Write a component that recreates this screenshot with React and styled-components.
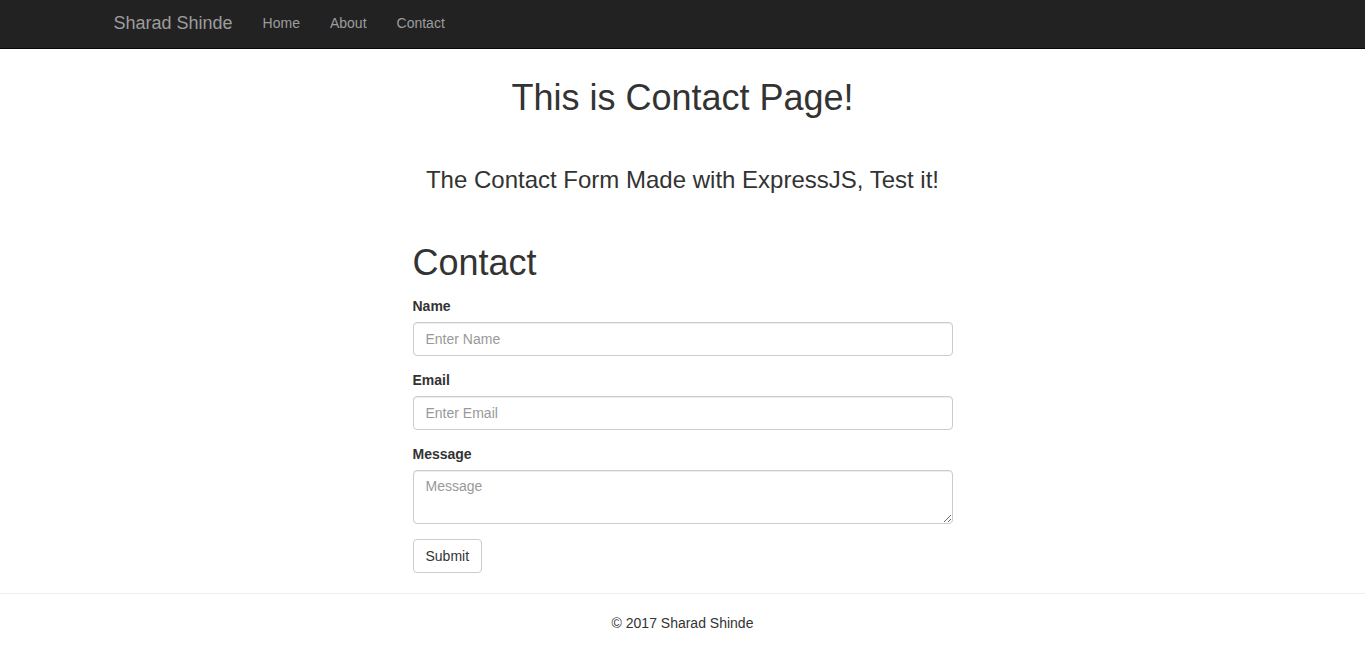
import styled, { createGlobalStyle } from 'styled-components';

const GlobalStyle = createGlobalStyle`
  body {
    margin: 0;
    font-family: "Liberation Sans", Arial, sans-serif;
    font-size: 14px;
    line-height: 1.42857;
    color: #333;
    background: #fff;
  }
  * { box-sizing: border-box; }
`;

export default function App() {
  return (
    <>
      <GlobalStyle />
      <Navbar>
        <NavInner>
          <Brand>Sharad Shinde</Brand>
          <NavLink>Home</NavLink>
          <NavLink>About</NavLink>
          <NavLink>Contact</NavLink>
        </NavInner>
      </Navbar>
      <Main>
        <PageTitle>This is Contact Page!</PageTitle>
        <SubTitle>The Contact Form Made with ExpressJS, Test it!</SubTitle>
        <Form onSubmit={(e) => e.preventDefault()}>
          <FormTitle>Contact</FormTitle>
          <FormGroup>
            <Label>Name</Label>
            <Input type='text' placeholder='Enter Name' />
          </FormGroup>
          <FormGroup>
            <Label>Email</Label>
            <Input type='email' placeholder='Enter Email' />
          </FormGroup>
          <FormGroup>
            <Label>Message</Label>
            <TextArea placeholder='Message' />
          </FormGroup>
          <Button type='submit'>Submit</Button>
        </Form>
      </Main>
      <Footer>© 2017 Sharad Shinde</Footer>
    </>
  );
}

const Navbar = styled.nav`
  background-color: #222;
  border-bottom: 1px solid #080808;
  height: 49px;
`;
const NavInner = styled.div`
  width: 1170px;
  margin: 0 auto;
  padding: 0 15px 0 16px;
  display: flex;
  align-items: center;
  height: 48px;
`;
const Brand = styled.a`
  font-size: 18px;
  color: #9d9d9d;
  margin-right: 15px;
  cursor: pointer;
`;
const NavLink = styled.a`
  color: #9d9d9d;
  font-size: 14px;
  padding: 0 15px;
  cursor: pointer;
`;
const Main = styled.main`
  width: 540px;
  margin: 0 auto;
`;
const PageTitle = styled.h1`
  font-size: 36px;
  font-weight: 500;
  line-height: 1.1;
  text-align: center;
  margin: 29px 0 0;
`;
const SubTitle = styled.h2`
  font-size: 24px;
  font-weight: 500;
  line-height: 1.1;
  text-align: center;
  margin: 49px 0 0;
`;
const Form = styled.form`
  margin-top: 50px;
`;
const FormTitle = styled.h1`
  font-size: 36px;
  font-weight: 500;
  line-height: 1.1;
  margin: 0 0 14px;
`;
const FormGroup = styled.div`
  margin-bottom: 15px;
`;
const Label = styled.label`
  display: block;
  font-weight: bold;
  margin-bottom: 5px;
`;
const Input = styled.input`
  display: block;
  width: 100%;
  height: 34px;
  padding: 6px 12px;
  font-family: inherit;
  font-size: 14px;
  color: #555;
  border: 1px solid #ccc;
  border-radius: 4px;
  box-shadow: inset 0 1px 1px rgba(0, 0, 0, 0.075);
  &::placeholder { color: #999; }
`;
const TextArea = styled.textarea`
  display: block;
  width: 100%;
  height: 54px;
  padding: 6px 12px;
  font-family: inherit;
  font-size: 14px;
  line-height: 1.42857;
  color: #555;
  border: 1px solid #ccc;
  border-radius: 4px;
  box-shadow: inset 0 1px 1px rgba(0, 0, 0, 0.075);
  &::placeholder { color: #999; }
`;
const Button = styled.button`
  height: 34px;
  padding: 6px 12px;
  font-family: inherit;
  font-size: 14px;
  color: #333;
  background: #fff;
  border: 1px solid #ccc;
  border-radius: 4px;
  cursor: pointer;
`;
const Footer = styled.footer`
  margin-top: 20px;
  border-top: 1px solid #eee;
  padding-top: 20px;
  text-align: center;
`;
